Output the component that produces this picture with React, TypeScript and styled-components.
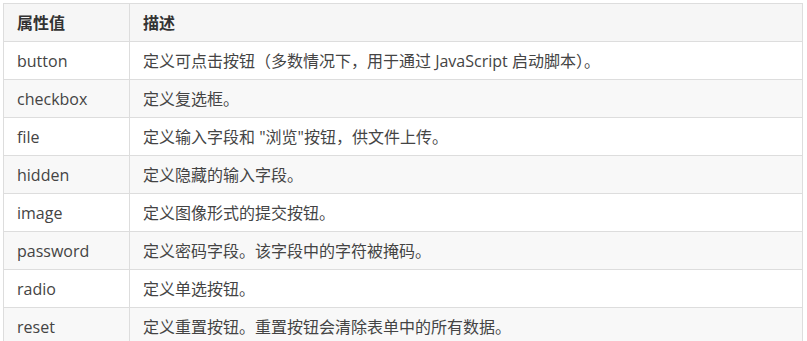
import React from 'react'
import styled, { createGlobalStyle } from 'styled-components'

const GlobalStyle = createGlobalStyle`
  html, body {
    margin: 0;
    padding: 0;
    background: #fff;
  }
  body {
    padding: 3px 0 0 3px;
    font-family: "Open Sans", "Noto Sans CJK SC", sans-serif;
    color: #444;
  }
`

const Table = styled.table`
  width: 800px;
  border-collapse: collapse;
  border: 1px solid #ddd;
  font-size: 16px;
  table-layout: fixed;
`

const HeadCell = styled.th<{ w?: number }>`
  ${({ w }) => (w ? `width: ${w}px;` : '')}
  height: 38px;
  padding: 0 13px;
  text-align: left;
  font-weight: bold;
  color: #333;
  background: #f6f6f6;
  border: 1px solid #ddd;
  box-sizing: border-box;
  line-height: 20px;
`

const Row = styled.tr<{ striped?: boolean }>`
  background: ${({ striped }) => (striped ? '#f8f8f8' : '#fff')};
`

const Cell = styled.td`
  height: 38px;
  padding: 0 13px;
  border: 1px solid #ddd;
  box-sizing: border-box;
  line-height: 20px;
  white-space: nowrap;
`

const rows: [string, string][] = [
  ['button', '定义可点击按钮（多数情况下，用于通过 JavaScript 启动脚本）。'],
  ['checkbox', '定义复选框。'],
  ['file', '定义输入字段和 "浏览"按钮，供文件上传。'],
  ['hidden', '定义隐藏的输入字段。'],
  ['image', '定义图像形式的提交按钮。'],
  ['password', '定义密码字段。该字段中的字符被掩码。'],
  ['radio', '定义单选按钮。'],
  ['reset', '定义重置按钮。重置按钮会清除表单中的所有数据。'],
]

export default function App() {
  return (
    <>
      <GlobalStyle />
      <Table>
        <thead>
          <tr>
            <HeadCell w={126}>属性值</HeadCell>
            <HeadCell>描述</HeadCell>
          </tr>
        </thead>
        <tbody>
          {rows.map(([name, desc], i) => (
            <Row key={name} striped={i % 2 === 1}>
              <Cell>{name}</Cell>
              <Cell>{desc}</Cell>
            </Row>
          ))}
        </tbody>
      </Table>
    </>
  )
}
